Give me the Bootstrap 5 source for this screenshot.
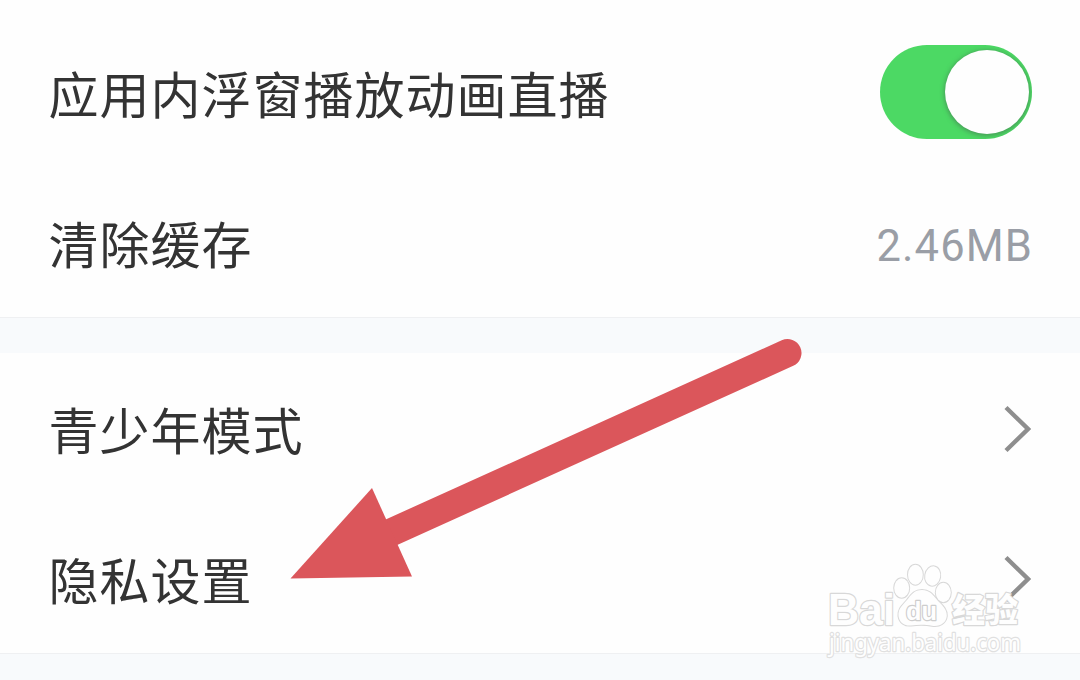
<!DOCTYPE html>
<html lang="zh-CN">
<head>
<meta charset="utf-8">
<meta name="viewport" content="width=device-width, initial-scale=1">
<title>设置</title>
<link href="https://cdn.jsdelivr.net/npm/bootstrap@5.3.0/dist/css/bootstrap.min.css" rel="stylesheet">
<style>
  body { background: #f8fafc; font-family: Roboto, "Noto Sans CJK SC", sans-serif; color: #333; height: 680px; overflow: hidden; }
  .settings-group { background: #fefefe; border-radius: 0; }
  .settings-group.first { padding-top: 17px; height: 318px; border-bottom: 1px solid #eff0f2 !important; }
  .settings-group.second { margin-top: 35px; height: 301px; border-bottom: 1px solid #eff0f2 !important; }
  .settings-row { height: 150px; padding: 0 48px; background: transparent; color: #333; }
  .settings-row svg { margin-right: 1px; margin-top: 1px; }
  .row-label { font: 400 50px/1 "Noto Sans CJK SC", sans-serif; letter-spacing: 1px; white-space: nowrap; padding-left: .5px; }
  .cache-size { font: 400 43.5px/1 Roboto, sans-serif; color: #9a9ea6; letter-spacing: 1.1px; padding-top: 10px; margin-right: -1px; }
  .switch-track { width: 152px; height: 94px; border-radius: 47px; background: #4cd964; padding-right: 3px; overflow: hidden; }
  .switch-knob { width: 84px; height: 84px; border-radius: 50%; background: #fefefe; box-shadow: 0 1px 4px 1px rgba(70,110,80,.55); }
  .overlay-layer { position: absolute; left: 0; top: 0; pointer-events: none; }
</style>
</head>
<body class="position-relative">
<main>
  <section class="settings-group first list-group list-group-flush">
    <div class="settings-row list-group-item border-0 d-flex align-items-center justify-content-between">
      <span class="row-label">应用内浮窗播放动画直播</span>
      <span class="switch-track d-flex align-items-center justify-content-end" role="switch" aria-checked="true"><span class="switch-knob"></span></span>
    </div>
    <div class="settings-row list-group-item border-0 d-flex align-items-center justify-content-between">
      <span class="row-label">清除缓存</span>
      <span class="cache-size">2.46MB</span>
    </div>
  </section>
  <section class="settings-group second list-group list-group-flush">
    <div class="settings-row list-group-item border-0 d-flex align-items-center justify-content-between">
      <span class="row-label">青少年模式</span>
      <svg width="28" height="48" viewBox="0 0 28 48" fill="none" stroke="#8e8e8e" stroke-width="4.4"><path d="M3 2.5 25 24 3 45.5"/></svg>
    </div>
    <div class="settings-row list-group-item border-0 d-flex align-items-center justify-content-between">
      <span class="row-label">隐私设置</span>
      <svg width="28" height="48" viewBox="0 0 28 48" fill="none" stroke="#8e8e8e" stroke-width="4.4"><path d="M3 2.5 25 24 3 45.5"/></svg>
    </div>
  </section>
</main>
<svg class="overlay-layer" width="1080" height="680" viewBox="0 0 1080 680">
  <!-- pointer arrow -->
  <path d="M392 532 787.5 353" stroke="#db565b" stroke-width="28" stroke-linecap="round"/>
  <path d="M290.5 578.5 372 488 412 576.5Z" fill="#db565b"/>
  <!-- watermark -->
  <g fill="#fefefe" stroke="#d8d8d8" stroke-width="2.4" stroke-linejoin="round" paint-order="stroke">
    <text x="828" y="624.5" font-family="Liberation Sans, sans-serif" font-weight="700" font-size="44" textLength="67" lengthAdjust="spacingAndGlyphs">Bai</text>
    <g stroke-width="2">
      <ellipse cx="901.7" cy="588" rx="7.5" ry="9.7"/>
      <ellipse cx="915.4" cy="574.7" rx="7.4" ry="10"/>
      <ellipse cx="932.7" cy="576" rx="7.5" ry="9.7" transform="rotate(10 932.7 576)"/>
      <ellipse cx="943.3" cy="592.5" rx="7.5" ry="9.7"/>
      <path d="M922 590C914 590 911 595 907 600C903 605 898 608 898.5 616C899.5 623 905 626 911 625.5C918 624.5 926 624.5 932 625.8C940 627 946 623 946.8 616C947 609 942 605 938 601C933 595 930 590 922 590Z"/>
    </g>
    <text x="906" y="619.5" font-family="Liberation Sans, sans-serif" font-weight="700" font-size="26" textLength="31" lengthAdjust="spacingAndGlyphs" stroke="#cdcdcd">du</text>
    <text x="952" y="622" font-family="Noto Sans CJK SC, sans-serif" font-weight="900" font-size="33" textLength="66">经验</text>
    <text x="829" y="651" font-family="Noto Sans, sans-serif" font-weight="400" font-size="24" textLength="192" lengthAdjust="spacingAndGlyphs" stroke="#e0e0e0">jingyan.baidu.com</text>
  </g>
</svg>
<script src="https://cdn.jsdelivr.net/npm/bootstrap@5.3.0/dist/js/bootstrap.bundle.min.js"></script>
</body>
</html>
